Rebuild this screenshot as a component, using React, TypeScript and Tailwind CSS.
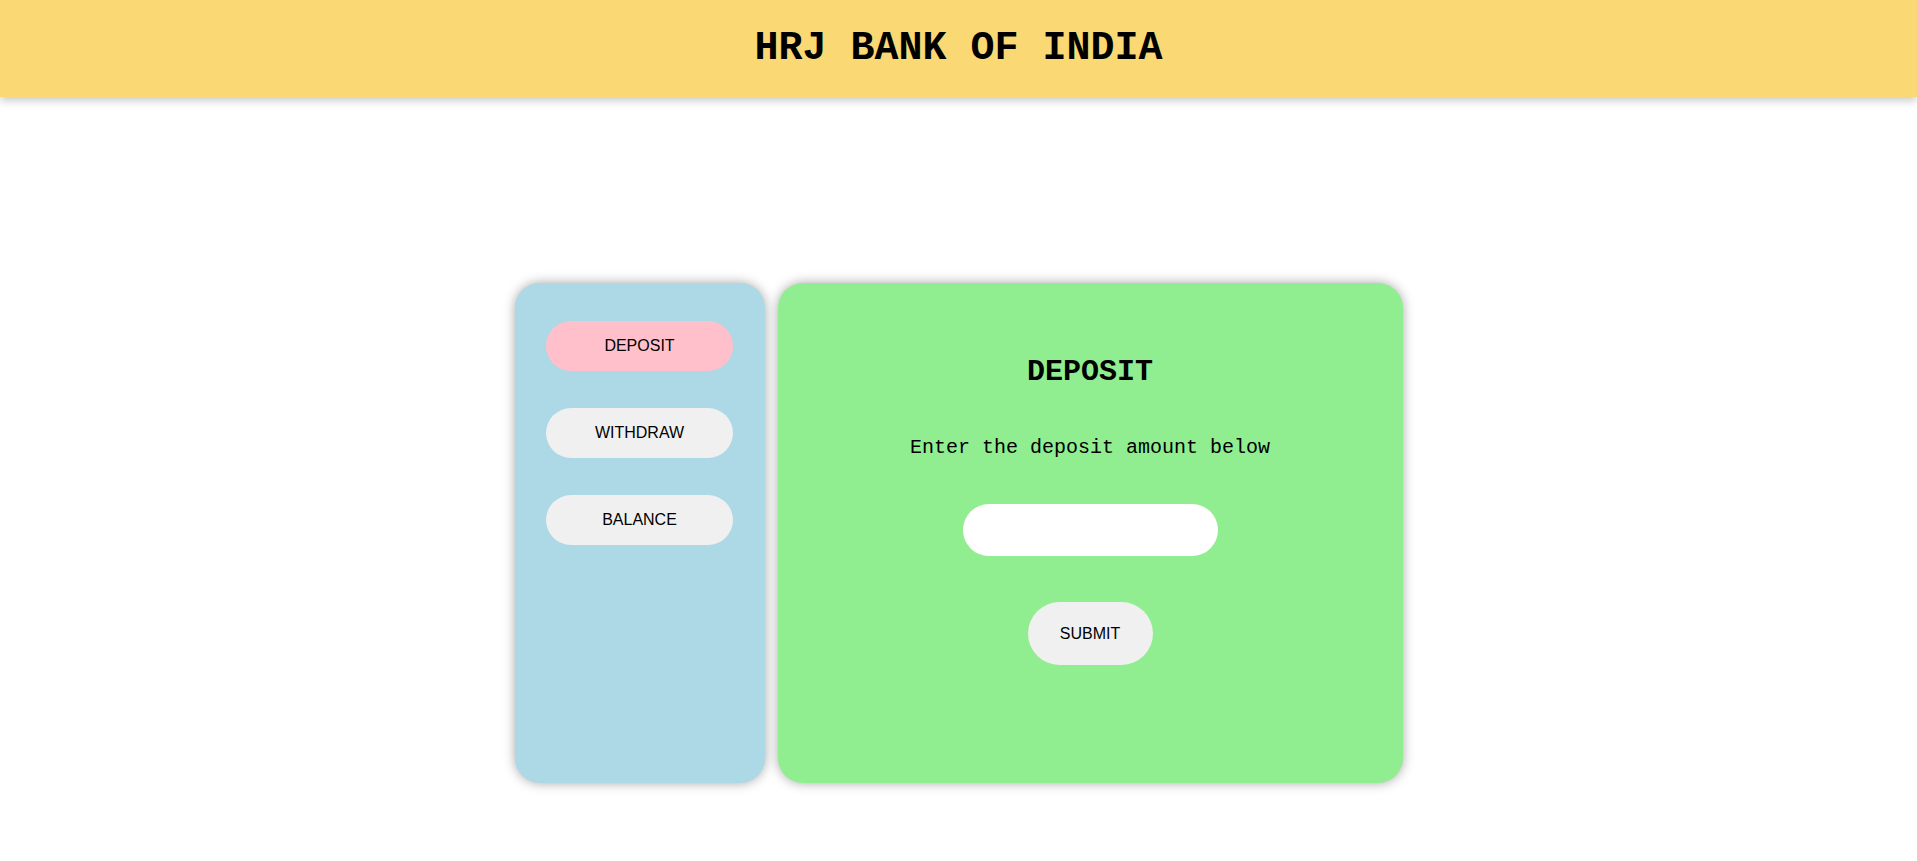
const menuItems = [
  { title: "DEPOSIT", active: true },
  { title: "WITHDRAW", active: false },
  { title: "BALANCE", active: false }
];

const Header = () => {
  return (
    <header className="flex h-[97px] items-center justify-center bg-[#fad873] shadow-[0_4px_8px_rgba(0,0,0,0.2)]">
      <h1 className="font-['Liberation_Mono','Courier_New',monospace] text-[40px] font-bold leading-[45px] text-black">
        HRJ BANK OF INDIA
      </h1>
    </header>
  );
};

const Sidebar = () => {
  return (
    <aside className="flex h-[500px] w-[250px] flex-col items-center gap-[37px] rounded-[25px] bg-[#add8e6] pt-[38px] shadow-[0_0_12px_rgba(0,0,0,0.35)]">
      {menuItems.map((item) => (
        <button
          key={item.title}
          className={
            item.active
              ? "h-[50px] w-[187px] rounded-full bg-[#ffc0cb] font-['Liberation_Sans',Arial,sans-serif] text-base text-black"
              : "h-[50px] w-[187px] rounded-full bg-[#f0f0f0] font-['Liberation_Sans',Arial,sans-serif] text-base text-black"
          }
        >
          {item.title}
        </button>
      ))}
    </aside>
  );
};

const DepositPanel = () => {
  return (
    <section className="flex h-[500px] w-[625px] flex-col items-center rounded-[25px] bg-[#90ee90] pt-[72px] shadow-[0_0_12px_rgba(0,0,0,0.35)]">
      <h2 className="font-['Liberation_Mono','Courier_New',monospace] text-[30px] font-bold leading-[34px] text-black">
        DEPOSIT
      </h2>
      <p className="mt-[47px] font-['Liberation_Mono','Courier_New',monospace] text-[20px] leading-[23px] text-black">
        Enter the deposit amount below
      </p>
      <input
        type="number"
        className="mt-[45px] h-[52px] w-[255px] rounded-full bg-white px-5 outline-none"
      />
      <button className="mt-[46px] h-[63px] w-[125px] rounded-full bg-[#f0f0f0] font-['Liberation_Sans',Arial,sans-serif] text-base text-black">
        SUBMIT
      </button>
    </section>
  );
};

const App = () => {
  return (
    <div className="min-h-[861px] bg-white">
      <Header />
      <main className="mt-[186px] flex justify-center gap-[13px]">
        <Sidebar />
        <DepositPanel />
      </main>
    </div>
  );
};

export default App;
